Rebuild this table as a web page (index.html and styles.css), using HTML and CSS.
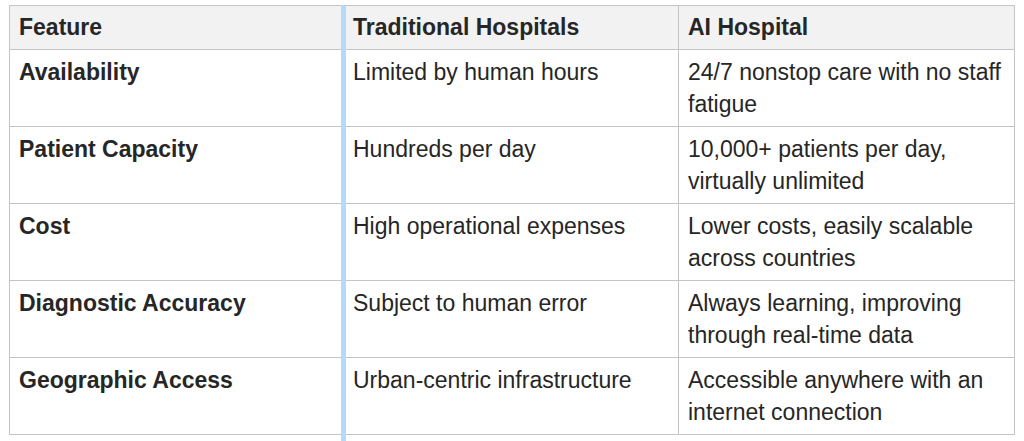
FILE: index.html
```html
<!DOCTYPE html>
<html>
<head>
<meta charset="utf-8">
<link rel="stylesheet" href="styles.css">
</head>
<body>
<div class="wrap">
  <table class="cmp">
    <colgroup>
      <col class="c1"><col class="c2"><col class="c3">
    </colgroup>
    <thead>
      <tr><th>Feature</th><th>Traditional Hospitals</th><th>AI Hospital</th></tr>
    </thead>
    <tbody>
      <tr><td class="feat">Availability</td><td>Limited by human hours</td><td>24/7 nonstop care with no staff fatigue</td></tr>
      <tr><td class="feat">Patient Capacity</td><td>Hundreds per day</td><td>10,000+ patients per day, virtually unlimited</td></tr>
      <tr><td class="feat">Cost</td><td>High operational expenses</td><td>Lower costs, easily scalable across countries</td></tr>
      <tr><td class="feat">Diagnostic Accuracy</td><td>Subject to human error</td><td>Always learning, improving through real-time data</td></tr>
      <tr><td class="feat">Geographic Access</td><td>Urban-centric infrastructure</td><td>Accessible anywhere with an internet connection</td></tr>
    </tbody>
  </table>
  <div class="bar"></div>
</div>
</body>
</html>
```
FILE: styles.css
```css
html, body {
  margin: 0;
  padding: 0;
  background: #fff;
}
body {
  height: 441px;
  overflow: hidden;
}
.wrap {
  position: relative;
  padding: 5px 0 0 9px;
  height: 436px;
}
.cmp {
  border-collapse: collapse;
  width: 1005px;
  table-layout: fixed;
  font-family: "Liberation Sans", Arial, sans-serif;
  font-size: 23px;
  line-height: 32px;
  color: #262626;
}
.c1 { width: 332px; }
.c2 { width: 337px; }
.c3 { width: 336px; }
.cmp th, .cmp td {
  border: 1px solid #c4c4c4;
  padding: 6px 9px 6px 9px;
  text-align: left;
  vertical-align: top;
}
.cmp td:nth-child(2), .cmp th:nth-child(2) { padding-left: 11px; }
.cmp th {
  background: #f2f2f2;
  font-weight: bold;
  padding-top: 5px;
}
.cmp td.feat { font-weight: bold; }
.bar {
  position: absolute;
  left: 341px;
  top: 5px;
  bottom: 0;
  width: 5px;
  background: #b4d9fb;
}
```
